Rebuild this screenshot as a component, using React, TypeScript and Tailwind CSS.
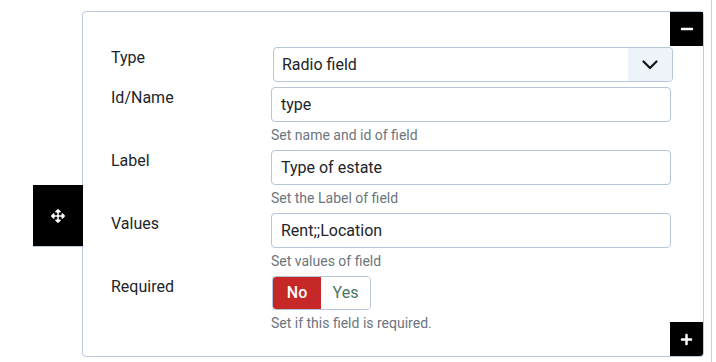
import { FaArrowsAlt, FaMinus, FaPlus } from 'react-icons/fa';

const font = { fontFamily: 'Roboto, "Liberation Sans", sans-serif' };

function FieldRow({ label, children, help, labelOffset = '-mt-px' }: { label: string; children: React.ReactNode; help?: string; labelOffset?: string }) {
  return (
    <div className="flex items-start">
      <div className={`w-[160px] shrink-0 text-[16px] leading-[24px] text-[#212529] ${labelOffset}`}>{label}</div>
      <div className="flex flex-col">
        {children}
        {help && <div className="mt-[3px] text-[14px] leading-[20px] text-[#6c757d]">{help}</div>}
      </div>
    </div>
  );
}

function TextInput({ value }: { value: string }) {
  return (
    <div className="flex h-[35px] w-[400px] items-center rounded-[4px] border border-[#b7c5da] bg-white pl-[9px] text-[16px] text-[#212529]">
      {value}
    </div>
  );
}

export default function App() {
  return (
    <div className="h-[362px] w-[712px] border-r border-[#c6d0de] bg-white pl-[82px] pt-[11px]" style={font}>
      <div className="relative h-[346px] w-[622px] rounded-[4px] border border-[#bccadf] pl-[28px] pt-[35px]">
        <div className="absolute right-full top-[173px] flex h-[62px] w-[50px] items-center justify-center border-b border-[#bccadf] bg-black text-white">
          <FaArrowsAlt size={14} />
        </div>
        <div className="absolute right-0 top-0 flex h-[34px] w-[33px] items-center justify-center bg-black text-white">
          <FaMinus size={14} />
        </div>
        <div className="absolute bottom-0 right-0 flex h-[34px] w-[33px] items-center justify-center rounded-br-[3px] bg-black text-white">
          <FaPlus size={13} />
        </div>

        <div className="flex flex-col gap-[5px]">
          <FieldRow label="Type">
            <div className="ml-[2px] flex h-[35px] w-[400px] items-center overflow-hidden rounded-[4px] border border-[#b7c5da] bg-white text-[16px] text-[#212529]">
              <span className="flex-1 pl-[8px]">Radio field</span>
              <span className="flex h-full w-[44px] items-center justify-center bg-[#eef3fa]">
                <svg width="16" height="10" viewBox="0 0 16 10" fill="none">
                  <path d="M1.5 1.5 L8 8 L14.5 1.5" stroke="#111" strokeWidth="2.2" strokeLinecap="round" strokeLinejoin="round" />
                </svg>
              </span>
            </div>
          </FieldRow>
          <FieldRow label="Id/Name" help="Set name and id of field">
            <TextInput value="type" />
          </FieldRow>
          <FieldRow label="Label" help="Set the Label of field">
            <TextInput value="Type of estate" />
          </FieldRow>
          <FieldRow label="Values" help="Set values of field">
            <TextInput value="Rent;;Location" />
          </FieldRow>
          <FieldRow label="Required" help="Set if this field is required." labelOffset="-mt-[1px]">
            <div className="ml-px flex h-[34px] w-fit overflow-hidden rounded-[4px] border border-[#b7c5da] text-[16px]">
              <span className="flex w-[48px] items-center justify-center bg-[#c62828] font-medium text-white">No</span>
              <span className="flex w-[49px] items-center justify-center bg-white text-[#4a7566]">Yes</span>
            </div>
          </FieldRow>
        </div>
      </div>
    </div>
  );
}
